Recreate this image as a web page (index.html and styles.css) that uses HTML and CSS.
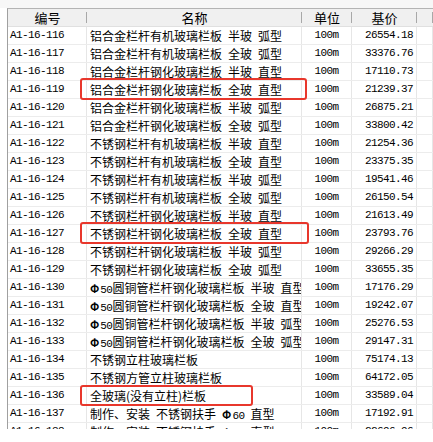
FILE: index.html
```html
<!DOCTYPE html>
<html>
<head>
<meta charset="utf-8">
<link rel="stylesheet" href="styles.css">
</head>
<body>
<div class="topband"></div>
<div class="frame">
  <div class="row head">
    <div class="c">编号</div><div class="c">名称</div><div class="c">单位</div><div class="c">基价</div><div class="c"></div>
  </div>
  <div class="row"><div class="code">A1-16-116</div><div class="name">铝合金栏杆有机玻璃栏板&ensp;半玻&ensp;弧型</div><div class="unit">100m</div><div class="price">26554.18</div><div></div></div>
  <div class="row"><div class="code">A1-16-117</div><div class="name">铝合金栏杆有机玻璃栏板&ensp;全玻&ensp;弧型</div><div class="unit">100m</div><div class="price">33376.76</div><div></div></div>
  <div class="row"><div class="code">A1-16-118</div><div class="name">铝合金栏杆钢化玻璃栏板&ensp;半玻&ensp;直型</div><div class="unit">100m</div><div class="price">17110.73</div><div></div></div>
  <div class="row"><div class="code">A1-16-119</div><div class="name">铝合金栏杆钢化玻璃栏板&ensp;全玻&ensp;直型</div><div class="unit">100m</div><div class="price">21239.37</div><div></div></div>
  <div class="row"><div class="code">A1-16-120</div><div class="name">铝合金栏杆钢化玻璃栏板&ensp;半玻&ensp;弧型</div><div class="unit">100m</div><div class="price">26875.21</div><div></div></div>
  <div class="row"><div class="code">A1-16-121</div><div class="name">铝合金栏杆钢化玻璃栏板&ensp;全玻&ensp;弧型</div><div class="unit">100m</div><div class="price">33800.42</div><div></div></div>
  <div class="row"><div class="code">A1-16-122</div><div class="name">不锈钢栏杆有机玻璃栏板&ensp;半玻&ensp;直型</div><div class="unit">100m</div><div class="price">21254.36</div><div></div></div>
  <div class="row"><div class="code">A1-16-123</div><div class="name">不锈钢栏杆有机玻璃栏板&ensp;全玻&ensp;直型</div><div class="unit">100m</div><div class="price">23375.35</div><div></div></div>
  <div class="row"><div class="code">A1-16-124</div><div class="name">不锈钢栏杆有机玻璃栏板&ensp;半玻&ensp;弧型</div><div class="unit">100m</div><div class="price">19541.46</div><div></div></div>
  <div class="row"><div class="code">A1-16-125</div><div class="name">不锈钢栏杆有机玻璃栏板&ensp;全玻&ensp;弧型</div><div class="unit">100m</div><div class="price">26150.54</div><div></div></div>
  <div class="row"><div class="code">A1-16-126</div><div class="name">不锈钢栏杆钢化玻璃栏板&ensp;半玻&ensp;直型</div><div class="unit">100m</div><div class="price">21613.49</div><div></div></div>
  <div class="row"><div class="code">A1-16-127</div><div class="name">不锈钢栏杆钢化玻璃栏板&ensp;全玻&ensp;直型</div><div class="unit">100m</div><div class="price">23793.76</div><div></div></div>
  <div class="row"><div class="code">A1-16-128</div><div class="name">不锈钢栏杆钢化玻璃栏板&ensp;半玻&ensp;弧型</div><div class="unit">100m</div><div class="price">29266.29</div><div></div></div>
  <div class="row"><div class="code">A1-16-129</div><div class="name">不锈钢栏杆钢化玻璃栏板&ensp;全玻&ensp;弧型</div><div class="unit">100m</div><div class="price">33655.35</div><div></div></div>
  <div class="row"><div class="code">A1-16-130</div><div class="name"><span class="phi">Φ</span><span class="num">50</span>圆铜管栏杆钢化玻璃栏板&ensp;半玻&ensp;直型</div><div class="unit">100m</div><div class="price">17176.29</div><div></div></div>
  <div class="row"><div class="code">A1-16-131</div><div class="name"><span class="phi">Φ</span><span class="num">50</span>圆铜管栏杆钢化玻璃栏板&ensp;全玻&ensp;直型</div><div class="unit">100m</div><div class="price">19242.07</div><div></div></div>
  <div class="row"><div class="code">A1-16-132</div><div class="name"><span class="phi">Φ</span><span class="num">50</span>圆铜管栏杆钢化玻璃栏板&ensp;半玻&ensp;弧型</div><div class="unit">100m</div><div class="price">25276.53</div><div></div></div>
  <div class="row"><div class="code">A1-16-133</div><div class="name"><span class="phi">Φ</span><span class="num">50</span>圆铜管栏杆钢化玻璃栏板&ensp;全玻&ensp;弧型</div><div class="unit">100m</div><div class="price">29147.31</div><div></div></div>
  <div class="row"><div class="code">A1-16-134</div><div class="name">不锈钢立柱玻璃栏板</div><div class="unit">100m</div><div class="price">75174.13</div><div></div></div>
  <div class="row"><div class="code">A1-16-135</div><div class="name">不锈钢方管立柱玻璃栏板</div><div class="unit">100m</div><div class="price">64172.05</div><div></div></div>
  <div class="row"><div class="code">A1-16-136</div><div class="name">全玻璃(没有立柱)栏板</div><div class="unit">100m</div><div class="price">33589.04</div><div></div></div>
  <div class="row"><div class="code">A1-16-137</div><div class="name">制作、安装&ensp;不锈钢扶手&ensp;<span class="phi">Φ</span><span class="num">60</span>&ensp;直型</div><div class="unit">100m</div><div class="price">17192.91</div><div></div></div>
  <div class="row"><div class="code">A1-16-138</div><div class="name">制作、安装&ensp;不锈钢扶手&ensp;<span class="phi">Φ</span><span class="num">75</span>&ensp;直型</div><div class="unit">100m</div><div class="price">22696.96</div><div></div></div>
</div>
<div class="mark m1"></div>
<div class="mark m2"></div>
<div class="mark m3"></div>
</body>
</html>
```
FILE: styles.css
```css
html, body {
  margin: 0;
  padding: 0;
  background: #ffffff;
}
body {
  position: relative;
  width: 433px;
  height: 442px;
  overflow: hidden;
  font-family: "Noto Sans CJK SC", "Noto Sans", sans-serif;
  font-size: 12px;
  color: #000;
}
.topband {
  height: 8px;
  background: #f7f7f7;
}
.frame {
  margin-left: 7px;
  height: 420px;
  overflow: hidden;
  border-left: 1px solid #a0a0a0;
  border-top: 1px solid #b4b4b4;
}
.row {
  display: grid;
  grid-template-columns: 79px 215px 50px 65px 1fr;
  height: 18px;
  box-sizing: border-box;
  border-bottom: 1px solid #ececec;
}
.row > div {
  border-right: 1px solid #e6e6e6;
  overflow: hidden;
  white-space: nowrap;
  line-height: 17px;
  box-sizing: border-box;
}
.head {
  background: #f0f0f0;
  border-bottom: 1px solid #e0e0e0;
}
.head > .c {
  text-align: center;
  font-size: 13px;
  line-height: 17px;
  border-right: none;
  position: relative;
}
.head > .c::after {
  content: "";
  position: absolute;
  right: 0;
  top: 3px;
  bottom: 3px;
  width: 1px;
  background: #a8a8a8;
}
.code, .unit, .price, .num {
  font-family: "Liberation Mono", "DejaVu Sans Mono", monospace;
  font-size: 11px;
  letter-spacing: -0.6px;
}
.code {
  padding-left: 2px;
}
.name {
  padding-left: 3px;
}
.unit {
  text-align: center;
}
.price {
  text-align: right;
  padding-right: 3px;
}
.phi {
  font-weight: bold;
  font-size: 11px;
  margin-right: 1px;
}
.mark {
  position: absolute;
  border: 2px solid #e8372c;
  border-radius: 3px;
  box-sizing: border-box;
}
.m1 { left: 80px; top: 78px; width: 227px; height: 22px; }
.m2 { left: 80px; top: 222px; width: 229px; height: 22px; }
.m3 { left: 80px; top: 385px; width: 173px; height: 21px; }
```
